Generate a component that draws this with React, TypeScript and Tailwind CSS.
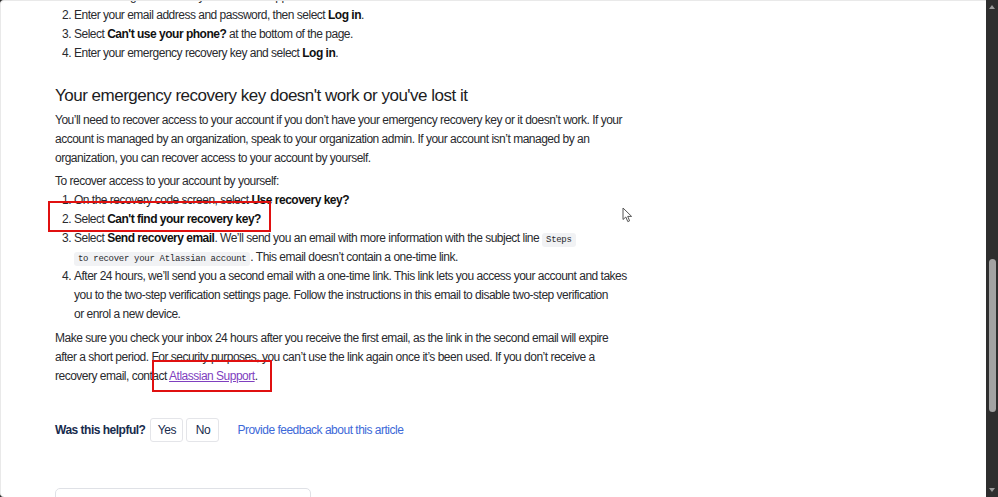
import React from "react";

const font = { fontFamily: '"Liberation Sans", Arial, sans-serif' };

const Line = ({ children, num }: { children: React.ReactNode; num?: string }) => (
  <div className="relative h-[19px] whitespace-nowrap pl-[19px] leading-[19px]">
    {num && <span className="absolute left-[7px] top-0">{num}</span>}
    {children}
  </div>
);

const Code = ({ children }: { children: React.ReactNode }) => (
  <code className="rounded-[3px] bg-[#f1f2f4] px-[4px] py-[2px] font-['Liberation_Mono',monospace] text-[9px] tracking-[-0.3px] text-[#292a2e]">
    {children}
  </code>
);

const Cursor = () => (
  <svg className="absolute left-[621px] top-[206px]" width="12" height="16" viewBox="0 0 12 16">
    <path
      d="M1 1 L1 12.5 L3.8 10 L5.8 14.6 L7.6 13.8 L5.7 9.4 L9.6 9.4 Z"
      fill="#fff"
      stroke="#555"
      strokeWidth="1"
      strokeLinejoin="round"
    />
  </svg>
);

export default function App() {
  return (
    <div className="flex h-[497px] w-[998px] overflow-hidden bg-[#2b2b2b]" style={font}>
      <div className="relative h-full w-[986px] overflow-hidden rounded-tl-[4px] rounded-bl-[4px] border-l border-t border-[#e9e9e9] bg-white text-[12px] tracking-[-0.5px] text-[#292a2e]">
        <div className="pl-[54px]">
          <div className="-mt-[14px]">
            <Line num="1.">Go to the login screen for your Atlassian app.</Line>
            <Line num="2.">
              Enter your email address and password, then select <b className="text-[#111]">Log in</b>.
            </Line>
            <Line num="3.">
              Select <b className="text-[#111]">Can't use your phone?</b> at the bottom of the page.
            </Line>
            <Line num="4.">
              Enter your emergency recovery key and select <b className="text-[#111]">Log in</b>.
            </Line>
          </div>

          <h2 className="mt-[20px] h-[26px] text-[17px] font-medium leading-[26px] tracking-[-0.5px] text-[#1c1c1e]">
            Your emergency recovery key doesn't work or you've lost it
          </h2>

          <p className="mt-[2px] whitespace-nowrap leading-[19px]">
            You’ll need to recover access to your account if you don’t have your emergency recovery key or it doesn’t work. If your
            <br />
            account is managed by an organization, speak to your organization admin. If your account isn’t managed by an
            <br />
            organization, you can recover access to your account by yourself.
          </p>

          <p className="mt-[4px] leading-[19px]">To recover access to your account by yourself:</p>

          <div>
            <Line num="1.">
              On the recovery code screen, select <b className="text-[#111]">Use recovery key?</b>
            </Line>
            <Line num="2.">
              Select <b className="text-[#111]">Can't find your recovery key?</b>
            </Line>
            <Line num="3.">
              Select <b className="text-[#111]">Send recovery email</b>. We’ll send you an email with more information with the subject line{" "}
              <Code>Steps </Code>
            </Line>
            <Line>
              <Code>to recover your Atlassian account</Code>. This email doesn’t contain a one-time link.
            </Line>
            <Line num="4.">
              After 24 hours, we’ll send you a second email with a one-time link. This link lets you access your account and takes
            </Line>
            <Line>you to the two-step verification settings page. Follow the instructions in this email to disable two-step verification</Line>
            <Line>or enrol a new device.</Line>
          </div>

          <p className="mt-[5px] whitespace-nowrap leading-[19px]">
            Make sure you check your inbox 24 hours after you receive the first email, as the link in the second email will expire
            <br />
            after a short period. For security purposes, you can’t use the link again once it’s been used. If you don’t receive a
            <br />
            recovery email, contact <a className="text-[#7f3fbf] underline">Atlassian Support</a>.
          </p>

          <div className="mt-[32px] flex h-[24px] items-center">
            <span className="font-bold text-[#172b4d]">Was this helpful?</span>
            <button className="ml-[5px] h-[24px] w-[33px] rounded-[3px] border border-[#e4e5e9] bg-white font-medium text-[#172b4d]">
              Yes
            </button>
            <button className="ml-[3px] h-[24px] w-[33px] rounded-[3px] border border-[#e4e5e9] bg-white font-medium text-[#172b4d]">
              No
            </button>
            <a className="ml-[18px] text-[#3d69d8]">Provide feedback about this article</a>
          </div>

          <div className="mt-[46px] h-[40px] w-[256px] rounded-t-[5px] border border-[#dfe1e6]" />
        </div>

        {/* annotation boxes */}
        <div className="absolute left-[47px] top-[200px] h-[31px] w-[223px] border-[2.5px] border-[#e01010]" />
        <div className="absolute left-[151px] top-[359px] h-[32px] w-[120px] border-[2.5px] border-[#e01010]" />
        <Cursor />
      </div>

      <div className="flex w-[12px] flex-col items-center bg-[#2e2e2e]">
        <div className="mt-[5px] h-0 w-0 border-x-[3.5px] border-b-[4px] border-x-transparent border-b-[#9a9a9a]" />
        <div className="mt-[250px] h-[153px] w-[7px] rounded-full bg-[#a3a3a3]" />
        <div className="mt-auto mb-[5px] h-0 w-0 border-x-[3.5px] border-t-[4px] border-x-transparent border-t-[#9a9a9a]" />
      </div>
    </div>
  );
}
